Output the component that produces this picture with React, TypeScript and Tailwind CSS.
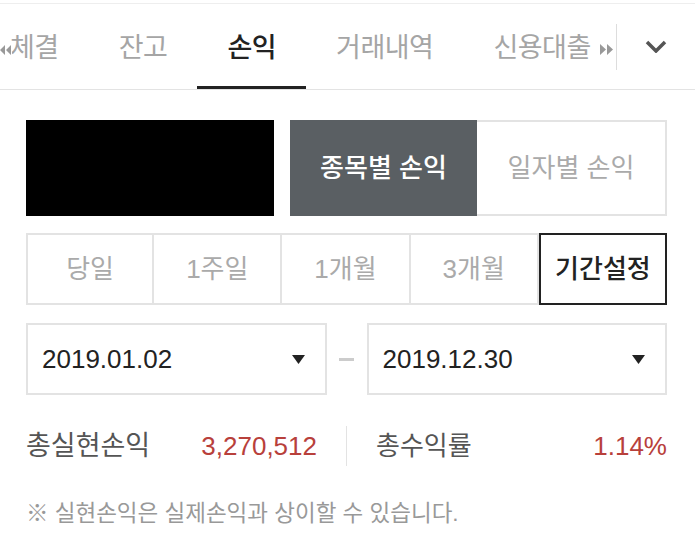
import React from 'react';

const font = { fontFamily: '"Liberation Sans", "Noto Sans CJK KR", sans-serif' };

const tabs = ['체결', '잔고', '손익', '거래내역', '신용대출'];
const periods = ['당일', '1주일', '1개월', '3개월', '기간설정'];

const Caret = () => (
  <svg width="13" height="9" viewBox="0 0 13 9" className="shrink-0">
    <path d="M0 0h13L6.5 9z" fill="#222" />
  </svg>
);

const DateSelect = ({ value }: { value: string }) => (
  <div className="flex-1 h-full border-2 border-[#e3e3e3] flex items-center justify-between pl-[14px] pr-[20px]">
    <span className="text-[26px] text-[#222]">{value}</span>
    <Caret />
  </div>
);

const App = () => {
  return (
    <div className="w-[695px] h-[540px] bg-white overflow-hidden" style={font}>
      <div className="h-[3px]" />
      <div className="border-t border-[#eeeeee]" />

      {/* tab bar */}
      <div className="relative h-[86px] border-b border-[#e3e3e3] flex">
        <div className="relative w-[616px] h-full overflow-hidden">
          <div className="flex h-full -ml-[20px] pt-[3px]">
            {tabs.map((t) => (
              <div key={t} className="relative h-full flex items-center px-[30px] shrink-0">
                <span
                  className={`text-[27px] tracking-[-0.5px] ${t === '손익' ? 'text-[#222] font-medium' : 'text-[#a5a5a5]'}`}
                >
                  {t}
                </span>
                {t === '손익' && <div className="absolute left-0 right-0 -bottom-px h-[4px] bg-[#222]" />}
              </div>
            ))}
          </div>
          <div className="absolute left-0 top-[41px] w-[12px] h-[12px] bg-white">
            <svg width="11" height="10" viewBox="0 0 11 10">
              <path d="M5 0L0 5l5 5zM11 0L6 5l5 5z" fill="#999" />
            </svg>
          </div>
          <div className="absolute right-0 top-[40px] w-[16px] h-[12px] bg-white flex justify-start">
            <svg width="13" height="11" viewBox="0 0 13 11">
              <path d="M0 0l6 5.5-6 5.5zM7 0l6 5.5-6 5.5z" fill="#999" />
            </svg>
          </div>
        </div>
        <div className="flex-1 flex items-center">
          <div className="w-px h-[46px] bg-[#dddddd]" />
          <div className="flex-1 flex justify-center">
            <svg width="22" height="13" viewBox="0 0 22 13">
              <path d="M2 2l9 9 9-9" fill="none" stroke="#555" strokeWidth="3.5" />
            </svg>
          </div>
        </div>
      </div>

      <div className="pl-[26px] pr-[28px]">
        {/* account + view toggle */}
        <div className="mt-[30px] h-[96px] flex gap-[16px]">
          <div className="w-[248px] h-full bg-black" />
          <div className="flex-1 flex h-full">
            <div className="w-[187px] h-full bg-[#5a5f63] flex items-center justify-center">
              <span className="text-[26px] text-white font-medium">종목별 손익</span>
            </div>
            <div className="flex-1 h-full border-2 border-l-0 border-[#e3e3e3] flex items-center justify-center">
              <span className="text-[26px] text-[#aaaaaa]">일자별 손익</span>
            </div>
          </div>
        </div>

        {/* period */}
        <div className="mt-[17px] h-[72px] grid grid-cols-5">
          {periods.map((p, i) => (
            <div
              key={p}
              className={`flex items-center justify-center ${
                p === '기간설정'
                  ? 'border-2 border-[#222] text-[#222] font-medium'
                  : `border-2 border-[#e3e3e3] text-[#aaaaaa] ${i > 0 ? 'border-l-0' : ''} border-r-2`
              }`}
            >
              <span className="text-[26px]">{p}</span>
            </div>
          ))}
        </div>

        {/* date range */}
        <div className="mt-[18px] h-[72px] flex items-center">
          <DateSelect value="2019.01.02" />
          <div className="w-[40px] flex justify-center">
            <div className="w-[15px] h-[3px] bg-[#cccccc]" />
          </div>
          <DateSelect value="2019.12.30" />
        </div>

        {/* summary */}
        <div className="mt-[31px] h-[40px] flex items-center">
          <div className="flex-1 flex items-center justify-between pr-[29px]">
            <span className="text-[27px] text-[#555]">총실현손익</span>
            <span className="text-[26px] text-[#b8403b]">3,270,512</span>
          </div>
          <div className="w-px h-[40px] bg-[#e3e3e3]" />
          <div className="flex-1 flex items-center justify-between pl-[29px]">
            <span className="text-[26px] text-[#555]">총수익률</span>
            <span className="text-[26px] text-[#b8403b]">1.14%</span>
          </div>
        </div>

        <div className="mt-[31px] text-[22.5px] text-[#999999]">※ 실현손익은 실제손익과 상이할 수 있습니다.</div>
      </div>
    </div>
  );
};

export default App;
